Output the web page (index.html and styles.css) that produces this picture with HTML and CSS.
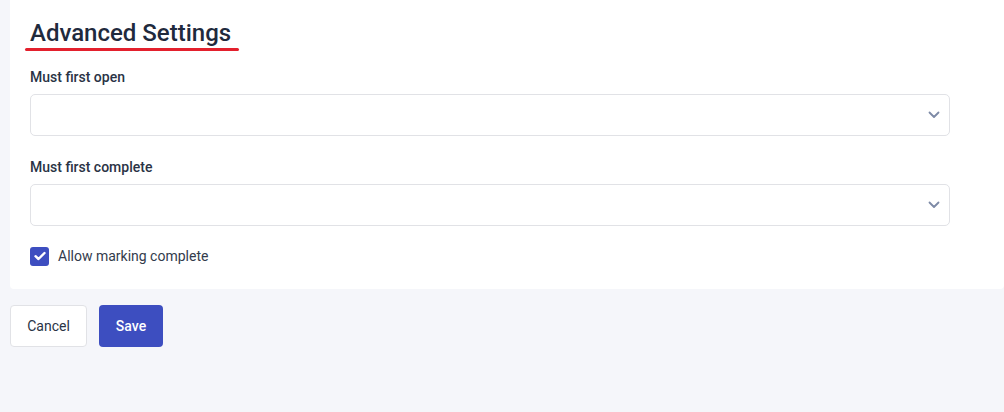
FILE: index.html
```html
<!DOCTYPE html>
<html lang="en">
<head>
<meta charset="utf-8">
<title>Advanced Settings</title>
<link rel="stylesheet" href="styles.css">
</head>
<body>
<main class="page">
  <section class="card">
    <h2 class="title">Advanced Settings</h2>
    <span class="underline"></span>
    <div class="field">
      <label class="label">Must first open</label>
      <div class="select">
        <svg class="chev" width="12" height="8" viewBox="0 0 12 8"><path d="M1.5 1.5 L6 6 L10.5 1.5" fill="none" stroke="#7d8aa6" stroke-width="1.8" stroke-linecap="round" stroke-linejoin="round"/></svg>
      </div>
    </div>
    <div class="field second">
      <label class="label">Must first complete</label>
      <div class="select">
        <svg class="chev" width="12" height="8" viewBox="0 0 12 8"><path d="M1.5 1.5 L6 6 L10.5 1.5" fill="none" stroke="#7d8aa6" stroke-width="1.8" stroke-linecap="round" stroke-linejoin="round"/></svg>
      </div>
    </div>
    <div class="check-row">
      <span class="checkbox">
        <svg width="12" height="10" viewBox="0 0 12 10"><path d="M1.5 5.2 L4.5 8 L10.5 2" fill="none" stroke="#fff" stroke-width="2.4" stroke-linecap="round" stroke-linejoin="round"/></svg>
      </span>
      <span class="check-label">Allow marking complete</span>
    </div>
  </section>
  <div class="actions">
    <button class="btn cancel">Cancel</button>
    <button class="btn save">Save</button>
  </div>
</main>
</body>
</html>
```
FILE: styles.css
```css
html, body {
  margin: 0;
  padding: 0;
  background: #f5f6fa;
  font-family: Roboto, "Liberation Sans", sans-serif;
}
.page {
  padding-left: 10px;
}
.card {
  background: #ffffff;
  padding: 17px 54px 23px 20px;
  border-radius: 0 0 4px 4px;
  display: flex;
  flex-direction: column;
}
.title {
  margin: 0;
  font-size: 24px;
  line-height: 32px;
  font-weight: 500;
  color: #1f2a3d;
}
.underline {
  display: block;
  width: 214px;
  height: 3px;
  margin: -1px 0 0 -5px;
  background: #e3202d;
  border-radius: 2px;
}
.field {
  display: flex;
  flex-direction: column;
  margin-top: 16px;
}
.field.second {
  margin-top: 21px;
}
.label {
  font-size: 14px;
  line-height: 20px;
  font-weight: 500;
  color: #2a3345;
  margin-bottom: 7px;
}
.select {
  height: 42px;
  box-sizing: border-box;
  border: 1px solid #e1e2e6;
  border-radius: 5px;
  display: flex;
  align-items: center;
  justify-content: flex-end;
  padding-right: 9px;
}
.chev {
  display: block;
}
.check-row {
  display: flex;
  align-items: center;
  margin-top: 20px;
  gap: 9px;
}
.checkbox {
  width: 19px;
  height: 19px;
  border-radius: 3px;
  background: #3d4ec0;
  display: flex;
  align-items: center;
  justify-content: center;
}
.check-label {
  font-size: 14px;
  line-height: 20px;
  color: #333b4c;
}
.actions {
  display: flex;
  gap: 12px;
  margin-top: 16px;
}
.btn {
  height: 42px;
  box-sizing: border-box;
  border-radius: 4px;
  font-family: Roboto, "Liberation Sans", sans-serif;
  font-size: 14px;
  cursor: pointer;
}
.cancel {
  width: 77px;
  background: #ffffff;
  border: 1px solid #e1e2e6;
  color: #2a3345;
}
.save {
  width: 64px;
  background: #3d4ec0;
  border: none;
  color: #ffffff;
  font-weight: 500;
}
```
